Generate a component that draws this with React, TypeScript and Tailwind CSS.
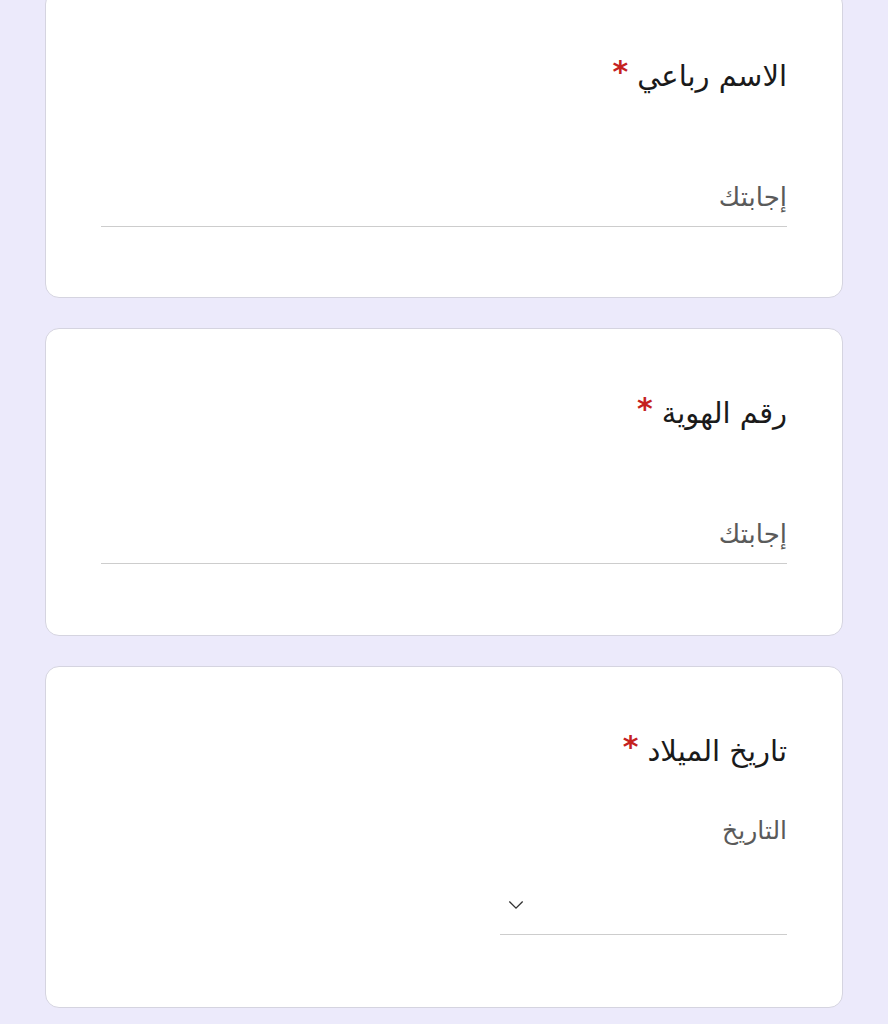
const font = { fontFamily: '"DejaVu Sans", sans-serif' }

function Title({ text }: { text: string }) {
  return (
    <div className="flex items-start gap-[9px] text-[29px] leading-[36px] text-[#1a1a1a]">
      <span>{text}</span>
      <span className="text-[#c5221f] font-bold text-[30px] leading-[28px]">*</span>
    </div>
  )
}

function TextCard({ title, first }: { title: string; first?: boolean }) {
  return (
    <div
      className={
        "bg-white border border-[#d5d4e0] rounded-[14px] h-[308px] shrink-0 px-[55px] pt-[66px] flex flex-col" +
        (first ? " -mt-[10px] pt-[67px]" : "")
      }
    >
      <Title text={title} />
      <div className="mt-[86px] border-b border-[#cdcdcd] pb-[12px] text-[26px] leading-[34px] text-[#5a5a5a]">
        إجابتك
      </div>
    </div>
  )
}

export default function App() {
  return (
    <div dir="rtl" style={font} className="h-[1024px] overflow-hidden bg-[#eceafb] px-[45px] flex flex-col gap-[30px]">
      <TextCard title="الاسم رباعي" first />
      <TextCard title="رقم الهوية" />
      <div className="bg-white border border-[#d5d4e0] rounded-[14px] h-[342px] shrink-0 px-[55px] pt-[66px] flex flex-col">
        <Title text="تاريخ الميلاد" />
        <div className="mt-[46px] text-[25px] leading-[32px] text-[#5a5a5a]">التاريخ</div>
        <div className="mt-[40px] w-[287px] h-[48px] border-b border-[#cdcdcd] flex items-start justify-end pl-[6px] pt-[7px]">
          <svg width="20" height="20" viewBox="0 0 24 24" fill="none" stroke="#333" strokeWidth="1.6">
            <path d="M4 9l8 8 8-8" />
          </svg>
        </div>
      </div>
    </div>
  )
}
